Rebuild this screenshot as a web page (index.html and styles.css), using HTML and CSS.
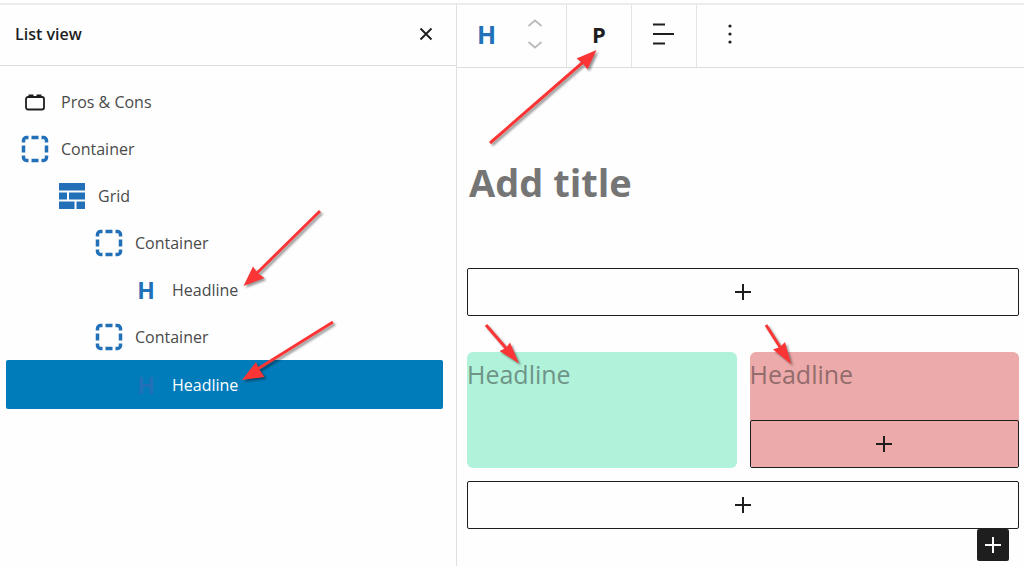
FILE: index.html
```html
<!DOCTYPE html>
<html lang="en">
<head>
    <meta charset="UTF-8">
    <meta name="viewport" content="width=device-width, initial-scale=1.0">
    <title>Block Editor</title>
    <link rel="stylesheet" href="styles.css">
</head>
<body>
    <svg class="symbols" aria-hidden="true">
        <symbol id="plus" viewBox="0 0 16 16">
            <path d="M8 0v16M0 8h16" fill="none" stroke="currentColor" stroke-width="2"/>
        </symbol>
        <symbol id="container" viewBox="0 0 28 28">
            <path d="M2.500 7.500V5.500a3 3 0 0 1 3-3h2M20.500 2.500h2a3 3 0 0 1 3 3v2M25.500 20.500v2a3 3 0 0 1-3 3h-2M7.500 25.500h-2a3 3 0 0 1-3-3v-2M10.500 2.500h7M10.500 25.500h7M2.500 10.500v7M25.500 10.500v7" fill="none" stroke="currentColor" stroke-width="3.500"/>
        </symbol>
    </svg>
    <div class="editor">
        <aside class="sidebar">
            <header class="sidebar-header">
                <h2>List view</h2>
                <button type="button" class="close" aria-label="Close">
                    <svg width="14" height="14" viewBox="0 0 14 14"><path d="M1.500 1.500l11 11M12.500 1.500l-11 11" fill="none" stroke="currentColor" stroke-width="1.900"/></svg>
                </button>
            </header>
            <ul class="tree">
                <li>
                    <a href="#" class="row">
                        <span class="icon dark">
                            <svg width="22" height="18" viewBox="0 0 22 18"><rect x="2" y="4" width="18" height="12.500" rx="2" fill="none" stroke="currentColor" stroke-width="1.800"/><path d="M4.500 1.500h5v2.500h-5zM12.500 1.500h5v2.500h-5z" fill="currentColor"/></svg>
                        </span>
                        Pros &amp; Cons
                    </a>
                </li>
                <li>
                    <a href="#" class="row">
                        <span class="icon"><svg width="28" height="28"><use href="#container"/></svg></span>
                        Container
                    </a>
                </li>
                <li>
                    <a href="#" class="row level-1">
                        <span class="icon">
                            <svg width="28" height="28" viewBox="0 0 28 28"><path d="M1 1h26v7.500H1zM1 10.500h8v7H1zM11 10.500h16v7H11zM1 19.500h15.500V27H1zM18.500 19.500H27V27h-8.500z" fill="currentColor"/></svg>
                        </span>
                        Grid
                    </a>
                </li>
                <li>
                    <a href="#" class="row level-2">
                        <span class="icon"><svg width="28" height="28"><use href="#container"/></svg></span>
                        Container
                    </a>
                </li>
                <li>
                    <a href="#" class="row level-3">
                        <span class="icon">H</span>
                        Headline
                    </a>
                </li>
                <li>
                    <a href="#" class="row level-2">
                        <span class="icon"><svg width="28" height="28"><use href="#container"/></svg></span>
                        Container
                    </a>
                </li>
                <li>
                    <a href="#" class="row level-3 selected" aria-current="true">
                        <span class="icon">H</span>
                        Headline
                    </a>
                </li>
            </ul>
        </aside>
        <main>
            <div class="toolbar">
                <div class="group group-wide">
                    <button type="button" class="block-type">H</button>
                    <div class="movers">
                        <button type="button" aria-label="Move up">
                            <svg width="16" height="8" viewBox="0 0 16 8"><path d="M1.500 7L8 1.500 14.500 7" fill="none" stroke="currentColor" stroke-width="1.800"/></svg>
                        </button>
                        <button type="button" aria-label="Move down">
                            <svg width="16" height="8" viewBox="0 0 16 8"><path d="M1.500 1L8 6.500 14.500 1" fill="none" stroke="currentColor" stroke-width="1.800"/></svg>
                        </button>
                    </div>
                </div>
                <div class="group">
                    <button type="button" class="tag">P</button>
                </div>
                <div class="group">
                    <button type="button" aria-label="Align text">
                        <svg width="22" height="22" viewBox="0 0 22 22"><path d="M0 1.500h12M0 11h21M0 20.500h12" fill="none" stroke="currentColor" stroke-width="2"/></svg>
                    </button>
                </div>
                <div class="group">
                    <button type="button" aria-label="Options">
                        <svg width="4" height="20" viewBox="0 0 4 20"><g fill="currentColor"><circle cx="2" cy="2" r="1.600"/><circle cx="2" cy="10" r="1.600"/><circle cx="2" cy="18" r="1.600"/></g></svg>
                    </button>
                </div>
            </div>
            <div class="canvas">
                <input type="text" class="title" placeholder="Add title" aria-label="Add title">
                <button type="button" class="appender" aria-label="Add block"><svg width="16" height="16"><use href="#plus"/></svg></button>
                <div class="columns">
                    <div class="card pros">
                        <p>Headline</p>
                    </div>
                    <div class="card cons">
                        <p>Headline</p>
                        <button type="button" class="appender" aria-label="Add block"><svg width="16" height="16"><use href="#plus"/></svg></button>
                    </div>
                </div>
                <button type="button" class="appender" aria-label="Add block"><svg width="16" height="16"><use href="#plus"/></svg></button>
                <button type="button" class="inserter" aria-label="Toggle block inserter"><svg width="16" height="16"><use href="#plus"/></svg></button>
            </div>
        </main>
    </div>
    <!-- callout arrows -->
    <svg class="arrows" width="1024" height="566" viewBox="0 0 1024 566" aria-hidden="true">
        <g stroke="#fb3535" stroke-width="3">
            <path d="M490 143L585 60.500M320 211L255 275M333 322L256 370M486 325L508 350.500M766 325L781 348.500"/>
        </g>
        <g fill="#fb3535">
            <path d="M596.500 50L576.500 58.500 582.500 63 587.500 69.500z"/>
            <path d="M243.500 286L253 266.500 257.500 273 264.500 278z"/>
            <path d="M242 380L256 362 259 369 264.500 377z"/>
            <path d="M519 363.500L510 342.500 506 348 499.500 351z"/>
            <path d="M791 364L785 342 780 347 773 349.500z"/>
        </g>
    </svg>
</body>
</html>
```

FILE: styles.css
```css
* {
    box-sizing: border-box;
}
body {
    margin: 0;
    font-family: "Open Sans", "Noto Sans", sans-serif;
    font-size: 16px;
    color: #1e1e1e;
    background-color: #fefefe;
}
button {
    display: flex;
    align-items: center;
    justify-content: center;
    padding: 0;
    border: none;
    background: none;
    color: #1e1e1e;
    font-family: inherit;
    cursor: pointer;
}
.symbols {
    display: none;
}
.editor {
    display: flex;
    min-height: 100vh;
    padding-top: 3px;
}

/* list view */
.sidebar {
    flex: 0 0 457px;
    border-top: 2px solid #ececec;
    border-right: 1px solid #e0e0e0;
}
.sidebar-header {
    display: flex;
    align-items: center;
    justify-content: space-between;
    height: 61px;
    padding: 0 20px 2px 15px;
    border-bottom: 1px solid #ddd;
}
.sidebar-header h2 {
    margin: 0;
    font-size: 16px;
    font-weight: 600;
}
.close {
    width: 20px;
    height: 20px;
}
.tree {
    margin: 0;
    padding: 12px 13px 0 6px;
    list-style: none;
}
.row {
    display: flex;
    align-items: center;
    gap: 12px;
    height: 47px;
    padding-left: 15px;
    border-radius: 2px;
    color: #4a4a4a;
    text-decoration: none;
}
.level-1 {
    padding-left: 52px;
}
.level-2 {
    padding-left: 89px;
}
.level-3 {
    padding-left: 126px;
}
.icon {
    display: flex;
    align-items: center;
    justify-content: center;
    width: 28px;
    color: #2271b8;
    font-size: 23px;
    font-weight: 700;
}
.icon.dark {
    color: #1e1e1e;
}
.selected {
    height: 49px;
    background-color: #007cba;
    color: #fff;
}

/* block toolbar */
main {
    flex: 1;
    min-width: 0;
    border-top: 2px solid #ececec;
}
.toolbar {
    display: flex;
    height: 63px;
    border-bottom: 1px solid #ddd;
}
.group {
    display: flex;
    align-items: center;
    justify-content: center;
    width: 65px;
    padding-bottom: 4px;
    border-right: 1px solid #e2e2e2;
}
.group:last-child {
    border-right: none;
}
.group-wide {
    justify-content: flex-start;
    gap: 31px;
    width: 110px;
    padding-left: 20px;
}
.block-type {
    color: #2271b8;
    font-size: 25px;
    font-weight: 700;
}
.tag {
    font-size: 22px;
    font-weight: 700;
}
.movers {
    display: grid;
    gap: 14px;
    color: #bbb;
}
.movers button {
    color: inherit;
}

/* canvas */
.canvas {
    padding: 84px 5px 0 10px;
}
.title {
    display: block;
    width: 100%;
    height: 60px;
    margin-bottom: 56px;
    padding: 0 0 0 2px;
    border: none;
    outline: none;
    background: none;
    font-family: inherit;
    font-size: 38px;
    font-weight: 700;
}
.title::placeholder {
    color: #757575;
    opacity: 1;
}
.appender {
    width: 100%;
    height: 48px;
    border: 1px solid #1e1e1e;
    border-radius: 2px;
}
.columns {
    display: grid;
    grid-template-columns: 1fr 1fr;
    gap: 13px;
    margin: 36px 0 13px;
}
.card {
    display: flex;
    flex-direction: column;
    justify-content: space-between;
    min-height: 116px;
    border-radius: 6px;
}
.card p {
    margin: 0;
    padding-top: 3px;
    font-size: 25px;
    line-height: 38px;
}
.pros {
    background-color: #b1f2da;
    color: #6f9488;
}
.cons {
    background-color: #ecaaaa;
    color: #936c6c;
}
.inserter {
    width: 32px;
    height: 32px;
    margin: 0 10px 0 auto;
    border-radius: 2px;
    background-color: #1e1e1e;
    color: #fff;
}
.arrows {
    position: absolute;
    top: 0;
    left: 0;
    pointer-events: none;
    filter: drop-shadow(2px 2px 1px rgba(0, 0, 0, 0.4));
}
```
